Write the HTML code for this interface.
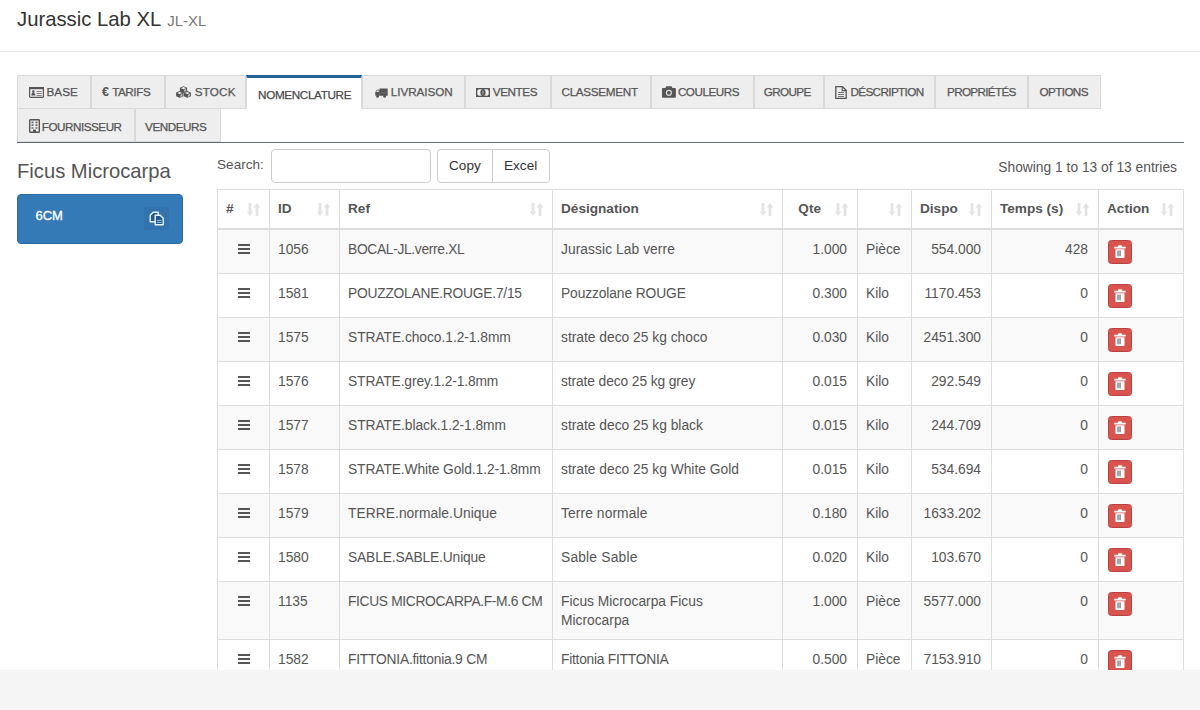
<!DOCTYPE html>
<html><head><meta charset="utf-8">
<style>
*{box-sizing:border-box;margin:0;padding:0}
html,body{width:1200px;height:710px;overflow:hidden;background:#fff;font-family:"Liberation Sans",sans-serif;color:#333;position:relative}
.abs{position:absolute;white-space:nowrap}
#title{left:17px;top:8.5px;font-size:20.3px;line-height:20.3px;color:#333}
#title small{font-size:15px;color:#777;margin-left:1px}
#hr{left:0;top:51px;width:1200px;height:1px;background:#e6e6e6}
.tab{position:absolute;height:34px;background:#eee;border:1px solid #d9d9d9;color:#555}
.tab.active{background:#fff;border-top:3px solid #22649a;border-bottom:none;color:#444}
.tab .tx{position:absolute;top:9px;font-size:11.7px;letter-spacing:-0.35px;line-height:14px;white-space:nowrap;-webkit-text-stroke:0.25px #555}
.tab svg{position:absolute}
#tabline{left:17px;top:142px;width:1167px;height:1px;background:#5e6b70}
#ficus{left:17px;top:160.5px;font-size:20.2px;line-height:20px;color:#555}
#btn6{left:17px;top:194px;width:166px;height:50px;background:#337ab7;border-radius:4px;border:1px solid #2e6da4}
#btn6 .t{position:absolute;left:17.5px;top:13px;color:#fff;font-size:13px;line-height:16px;-webkit-text-stroke:0.3px #fff}
#btn6 .ic{position:absolute;left:126px;top:12px;width:25px;height:23px;background:#3373ad;border-radius:2px}
#btn6 svg{position:absolute;left:131px;top:15.5px}
#search{left:217px;top:157px;font-size:13.6px;line-height:16px;color:#555}
#inp{left:271px;top:149px;width:160px;height:34px;border:1px solid #ccc;border-radius:4px;background:#fff}
#bgrp{left:437px;top:149px;width:113px;height:34px;border:1px solid #ccc;border-radius:4px;background:#fff}
#bgrp .d{position:absolute;left:54px;top:0;width:1px;height:32px;background:#ccc}
#bgrp span{position:absolute;top:8px;font-size:13.6px;line-height:16px;color:#333}
#showing{left:970px;top:160px;width:207px;text-align:right;font-size:13.8px;line-height:16px;color:#555}
#gray{left:0;top:670px;width:1200px;height:40px;background:#f5f5f5}
/* table */
#tbl{left:217px;top:189px;width:967px}
.row{position:absolute;left:0;width:967px;border-left:1px solid #ddd;border-right:1px solid #ddd;border-bottom:1px solid #ddd}
.row.head{top:0;height:41px;border-top:1px solid #ddd;border-bottom:2px solid #ddd;background:#fff}
.row.odd{background:#f9f9f9}
.c{position:absolute;top:0;height:100%;border-left:1px solid #ddd;font-size:13.8px;line-height:19px;color:#555;padding:10.25px 10px 0 8px;white-space:nowrap}
.c.first{border-left:none}
.c.r{text-align:right}
.c.nw{white-space:nowrap}
.head .c{font-weight:bold;color:#555;padding-top:9px;font-size:13.6px}
.sort{position:absolute;right:9px;top:12.5px;width:13px;height:13px}
.ham{position:absolute;left:20px;top:14px;width:12px;height:10px}
.ham i{display:block;height:2px;background:#555;margin-bottom:2px}
.trash{position:absolute;left:9px;top:10px;width:24px;height:24px;background:#d9534f;border:1px solid #b9403b;border-radius:3.5px}
</style></head><body>
<div id="title" class="abs">Jurassic Lab XL <small>JL-XL</small></div>
<div id="hr" class="abs"></div>
<div class="tab" style="left:17px;top:75px;width:74px"><svg style="left:10.9px;top:11.2px" width="15" height="11" viewBox="0 0 15 11"><rect x="0.6" y="0.6" width="13.8" height="9.8" rx="1" fill="none" stroke="#555" stroke-width="1.2"/><rect x="0" y="0" width="15" height="2.2" fill="#555"/><circle cx="4.3" cy="4.6" r="1.3" fill="#555"/><path d="M2.3 8.6c0-2 0.8-2.6 2-2.6s2 0.6 2 2.6z" fill="#555"/><path d="M7.5 4h5.3v1.1h-5.3zM7.5 6h5.3v1.1h-5.3zM7.5 8h5.3v0.9h-5.3z" fill="#555" opacity="0.7"/></svg><span class="tx" style="left:28.4px;top:9px;letter-spacing:0.1px">BASE</span></div>
<div class="tab" style="left:91px;top:75px;width:74px"><span class="tx" style="left:10.0px;top:9.3px;font-size:12.6px;font-weight:bold;letter-spacing:0;-webkit-text-stroke:0px">€</span><span class="tx" style="left:20.2px;top:9px;letter-spacing:-0.44px">TARIFS</span></div>
<div class="tab" style="left:165px;top:75px;width:81px"><svg style="left:9.9px;top:10.4px" width="15" height="12" viewBox="0 0 15 12"><path d="M7.5 0.2l3.6 1.5v3.7l-3.6 1.5-3.6-1.5v-3.7z" fill="#555"/><path d="M7.5 1.1l2.5 1.05-2.5 1.05-2.5-1.05z" fill="#f2f2f2"/><path d="M8.1 3.8000000000000003l2.1-0.9v2.3l-2.1 0.9z" fill="#bbb"/><path d="M3.7 5.1l3.6 1.5v3.7l-3.6 1.5-3.6-1.5v-3.7z" fill="#555"/><path d="M3.7 6.0l2.5 1.05-2.5 1.05-2.5-1.05z" fill="#f2f2f2"/><path d="M4.3 8.7l2.1-0.9v2.3l-2.1 0.9z" fill="#bbb"/><path d="M11.3 5.1l3.6 1.5v3.7l-3.6 1.5-3.6-1.5v-3.7z" fill="#555"/><path d="M11.3 6.0l2.5 1.05-2.5 1.05-2.5-1.05z" fill="#f2f2f2"/><path d="M11.9 8.7l2.1-0.9v2.3l-2.1 0.9z" fill="#bbb"/></svg><span class="tx" style="left:28.8px;top:9px;letter-spacing:0.15px">STOCK</span></div>
<div class="tab active" style="left:246px;top:75px;width:116px"><span class="tx" style="left:11.1px;top:9.5px;letter-spacing:-0.35px">NOMENCLATURE</span></div>
<div class="tab" style="left:362px;top:75px;width:103px"><svg style="left:12px;top:11.9px" width="13" height="10" viewBox="0 0 13 10"><path d="M4.5 0.5h8.2v7.3h-8.2z" fill="#555"/><path d="M0.3 4.2l1.6-2.4h2.8v6h-4.4z" fill="#555"/><path d="M1.2 4l1-1.5h1.5v1.5z" fill="#eee"/><circle cx="2.6" cy="8.4" r="1.4" fill="#555"/><circle cx="9.6" cy="8.4" r="1.4" fill="#555"/><path d="M6 4.5h5.5v0.8h-5.5z" fill="#777"/></svg><span class="tx" style="left:27.8px;top:9px;letter-spacing:-0.06px">LIVRAISON</span></div>
<div class="tab" style="left:465px;top:75px;width:86px"><svg style="left:9.8px;top:11.9px" width="14" height="9" viewBox="0 0 14 9"><rect x="0" y="0" width="14" height="9" fill="#555"/><rect x="1.3" y="1.3" width="11.4" height="6.4" fill="#f4f4f4"/><ellipse cx="7" cy="4.5" rx="2.6" ry="3.6" fill="#555"/><path d="M0 0h2.2v2.2h-2.2zM11.8 0h2.2v2.2h-2.2zM0 6.8h2.2v2.2h-2.2zM11.8 6.8h2.2v2.2h-2.2z" fill="#555"/><ellipse cx="7" cy="4.5" rx="1" ry="2.4" fill="#888"/></svg><span class="tx" style="left:26.8px;top:9px;letter-spacing:-0.42px">VENTES</span></div>
<div class="tab" style="left:551px;top:75px;width:100px"><span class="tx" style="left:9.5px;top:9px;letter-spacing:-0.3px">CLASSEMENT</span></div>
<div class="tab" style="left:651px;top:75px;width:103px"><svg style="left:10px;top:9.9px" width="14" height="12" viewBox="0 0 14 12"><path d="M4.3 0.2h5.2l1 1.8h2.3c0.7 0 1.1 0.4 1.1 1.1v7.6c0 0.7-0.4 1.1-1.1 1.1h-11.7c-0.7 0-1.1-0.4-1.1-1.1v-7.6c0-0.7 0.4-1.1 1.1-1.1h2.3z" fill="#555"/><circle cx="6.9" cy="6.8" r="3.1" fill="#ddd"/><circle cx="6.9" cy="6.8" r="1.9" fill="#555"/></svg><span class="tx" style="left:25.9px;top:9px;letter-spacing:-0.47px">COULEURS</span></div>
<div class="tab" style="left:754px;top:75px;width:70px"><span class="tx" style="left:8.7px;top:9px;letter-spacing:-0.6px">GROUPE</span></div>
<div class="tab" style="left:824px;top:75px;width:111px"><svg style="left:10px;top:9.7px" width="12" height="13" viewBox="0 0 12 13"><path d="M0.8 0.7h6.8l3.6 3.6v8h-10.4z" fill="none" stroke="#555" stroke-width="1.3"/><path d="M7.2 0.7v3.9h4" fill="none" stroke="#555" stroke-width="1.1"/><path d="M3 6h6v1h-6zM3 8h6v1h-6zM3 10h6v1h-6z" fill="#555" opacity="0.8"/></svg><span class="tx" style="left:25.4px;top:9px;letter-spacing:-0.61px">DÉSCRIPTION</span></div>
<div class="tab" style="left:935px;top:75px;width:93px"><span class="tx" style="left:11.0px;top:9px;letter-spacing:-0.66px">PROPRIÉTÉS</span></div>
<div class="tab" style="left:1028px;top:75px;width:73px"><span class="tx" style="left:10.6px;top:9px;letter-spacing:-0.62px">OPTIONS</span></div>
<div class="tab" style="left:17px;top:108px;width:118px"><svg style="left:10.5px;top:10.1px" width="11" height="14" viewBox="0 0 11 14"><rect x="0.7" y="0.7" width="9.6" height="12.6" rx="0.6" fill="none" stroke="#555" stroke-width="1.4"/><path d="M2.5 2.4h2v1.8h-2zM6.5 2.4h2v1.8h-2zM2.5 5.3h2v1.8h-2zM6.5 5.3h2v1.8h-2zM2.5 8.2h2v1.6h-2zM6.5 8.2h2v1.6h-2z" fill="#555" opacity="0.85"/><path d="M4 10.6h3v2.7h-3z" fill="#555"/></svg><span class="tx" style="left:23.8px;top:10.5px;letter-spacing:-0.48px">FOURNISSEUR</span></div>
<div class="tab" style="left:135px;top:108px;width:86px"><span class="tx" style="left:9.1px;top:10.5px;letter-spacing:-0.47px">VENDEURS</span></div>
<div id="tabline" class="abs"></div>

<div id="ficus" class="abs">Ficus Microcarpa</div>
<div id="btn6" class="abs"><span class="t">6CM</span><span class="ic"></span><svg width="16" height="15" viewBox="0 0 16 15"><path d="M1.2 4.2l3-3h5v9.6h-8z" fill="#25598a" stroke="#e8f4ff" stroke-width="1.4" stroke-linejoin="round"/><path d="M6.2 4.2h5l3 3v6.6h-8z" fill="#25598a" stroke="#e8f4ff" stroke-width="1.4" stroke-linejoin="round"/><path d="M8 9h4.5v1h-4.5zM8 11h4.5v1h-4.5z" fill="#8fc0ea"/></svg></div>

<div id="search" class="abs">Search:</div>
<div id="inp" class="abs"></div>
<div id="bgrp" class="abs"><span style="left:11px">Copy</span><div class="d"></div><span style="left:66px">Excel</span></div>
<div id="showing" class="abs">Showing 1 to 13 of 13 entries</div>

<div id="tbl" class="abs">
<div class="row head" style="height:41px"><div class="c first" style="left:0px;width:51px;">#<svg class="sort" viewBox="0 0 13 13"><path d="M1.6 0h2.8v8.4h2l-3.4 4.6-3.4-4.6h2z M8.6 13h2.8v-8.4h2l-3.4-4.6-3.4 4.6h2z" fill="#e3e3e3"/></svg></div><div class="c" style="left:51px;width:70px;">ID<svg class="sort" viewBox="0 0 13 13"><path d="M1.6 0h2.8v8.4h2l-3.4 4.6-3.4-4.6h2z M8.6 13h2.8v-8.4h2l-3.4-4.6-3.4 4.6h2z" fill="#e3e3e3"/></svg></div><div class="c" style="left:121px;width:213px;">Ref<svg class="sort" viewBox="0 0 13 13"><path d="M1.6 0h2.8v8.4h2l-3.4 4.6-3.4-4.6h2z M8.6 13h2.8v-8.4h2l-3.4-4.6-3.4 4.6h2z" fill="#e3e3e3"/></svg></div><div class="c" style="left:334px;width:230px;">Désignation<svg class="sort" viewBox="0 0 13 13"><path d="M1.6 0h2.8v8.4h2l-3.4 4.6-3.4-4.6h2z M8.6 13h2.8v-8.4h2l-3.4-4.6-3.4 4.6h2z" fill="#e3e3e3"/></svg></div><div class="c r" style="left:564px;width:75px;padding-right:36px;">Qte<svg class="sort" viewBox="0 0 13 13"><path d="M1.6 0h2.8v8.4h2l-3.4 4.6-3.4-4.6h2z M8.6 13h2.8v-8.4h2l-3.4-4.6-3.4 4.6h2z" fill="#e3e3e3"/></svg></div><div class="c" style="left:639px;width:54px;"><svg class="sort" viewBox="0 0 13 13"><path d="M1.6 0h2.8v8.4h2l-3.4 4.6-3.4-4.6h2z M8.6 13h2.8v-8.4h2l-3.4-4.6-3.4 4.6h2z" fill="#e3e3e3"/></svg></div><div class="c" style="left:693px;width:80px;">Dispo<svg class="sort" viewBox="0 0 13 13"><path d="M1.6 0h2.8v8.4h2l-3.4 4.6-3.4-4.6h2z M8.6 13h2.8v-8.4h2l-3.4-4.6-3.4 4.6h2z" fill="#e3e3e3"/></svg></div><div class="c" style="left:773px;width:107px;">Temps (s)<svg class="sort" viewBox="0 0 13 13"><path d="M1.6 0h2.8v8.4h2l-3.4 4.6-3.4-4.6h2z M8.6 13h2.8v-8.4h2l-3.4-4.6-3.4 4.6h2z" fill="#e3e3e3"/></svg></div><div class="c" style="left:880px;width:85px;">Action<svg class="sort" viewBox="0 0 13 13"><path d="M1.6 0h2.8v8.4h2l-3.4 4.6-3.4-4.6h2z M8.6 13h2.8v-8.4h2l-3.4-4.6-3.4 4.6h2z" fill="#e3e3e3"/></svg></div></div>
<div class="row odd" style="top:41px;height:44px"><div class="c first" style="left:0px;width:51px"><span class="ham"><i></i><i></i><i></i></span></div><div class="c" style="left:51px;width:70px">1056</div><div class="c nw" style="left:121px;width:213px"><span style="letter-spacing:-0.325px">BOCAL-JL.verre.XL</span></div><div class="c" style="left:334px;width:230px"><span style="letter-spacing:0.065px">Jurassic Lab verre</span></div><div class="c r" style="left:564px;width:75px">1.000</div><div class="c" style="left:639px;width:54px">Pièce</div><div class="c r" style="left:693px;width:80px">554.000</div><div class="c r" style="left:773px;width:107px">428</div><div class="c" style="left:880px;width:85px"><span class="trash"><svg width="12" height="13" viewBox="0 0 12 13" style="position:absolute;left:5.2px;top:4px"><path d="M4.2 0.3h3.6v1.4h3.9v1.9h-11.4v-1.9h3.9z" fill="#fff"/><path d="M1.5 4.2h9v8.1c0 0.4-0.3 0.7-0.7 0.7h-7.6c-0.4 0-0.7-0.3-0.7-0.7z" fill="#fff"/><path d="M3.5 5.6h1.1v5.6h-1.1zM5.5 5.6h1.1v5.6h-1.1z" fill="#6a5a66"/></svg></span></div></div>
<div class="row" style="top:85px;height:44px"><div class="c first" style="left:0px;width:51px"><span class="ham"><i></i><i></i><i></i></span></div><div class="c" style="left:51px;width:70px">1581</div><div class="c nw" style="left:121px;width:213px"><span style="letter-spacing:-0.23px">POUZZOLANE.ROUGE.7/15</span></div><div class="c" style="left:334px;width:230px"><span style="letter-spacing:-0.113px">Pouzzolane ROUGE</span></div><div class="c r" style="left:564px;width:75px">0.300</div><div class="c" style="left:639px;width:54px">Kilo</div><div class="c r" style="left:693px;width:80px">1170.453</div><div class="c r" style="left:773px;width:107px">0</div><div class="c" style="left:880px;width:85px"><span class="trash"><svg width="12" height="13" viewBox="0 0 12 13" style="position:absolute;left:5.2px;top:4px"><path d="M4.2 0.3h3.6v1.4h3.9v1.9h-11.4v-1.9h3.9z" fill="#fff"/><path d="M1.5 4.2h9v8.1c0 0.4-0.3 0.7-0.7 0.7h-7.6c-0.4 0-0.7-0.3-0.7-0.7z" fill="#fff"/><path d="M3.5 5.6h1.1v5.6h-1.1zM5.5 5.6h1.1v5.6h-1.1z" fill="#6a5a66"/></svg></span></div></div>
<div class="row odd" style="top:129px;height:44px"><div class="c first" style="left:0px;width:51px"><span class="ham"><i></i><i></i><i></i></span></div><div class="c" style="left:51px;width:70px">1575</div><div class="c nw" style="left:121px;width:213px"><span style="letter-spacing:-0.048px">STRATE.choco.1.2-1.8mm</span></div><div class="c" style="left:334px;width:230px">strate deco 25 kg choco</div><div class="c r" style="left:564px;width:75px">0.030</div><div class="c" style="left:639px;width:54px">Kilo</div><div class="c r" style="left:693px;width:80px">2451.300</div><div class="c r" style="left:773px;width:107px">0</div><div class="c" style="left:880px;width:85px"><span class="trash"><svg width="12" height="13" viewBox="0 0 12 13" style="position:absolute;left:5.2px;top:4px"><path d="M4.2 0.3h3.6v1.4h3.9v1.9h-11.4v-1.9h3.9z" fill="#fff"/><path d="M1.5 4.2h9v8.1c0 0.4-0.3 0.7-0.7 0.7h-7.6c-0.4 0-0.7-0.3-0.7-0.7z" fill="#fff"/><path d="M3.5 5.6h1.1v5.6h-1.1zM5.5 5.6h1.1v5.6h-1.1z" fill="#6a5a66"/></svg></span></div></div>
<div class="row" style="top:173px;height:44px"><div class="c first" style="left:0px;width:51px"><span class="ham"><i></i><i></i><i></i></span></div><div class="c" style="left:51px;width:70px">1576</div><div class="c nw" style="left:121px;width:213px"><span style="letter-spacing:-0.125px">STRATE.grey.1.2-1.8mm</span></div><div class="c" style="left:334px;width:230px"><span style="letter-spacing:-0.105px">strate deco 25 kg grey</span></div><div class="c r" style="left:564px;width:75px">0.015</div><div class="c" style="left:639px;width:54px">Kilo</div><div class="c r" style="left:693px;width:80px">292.549</div><div class="c r" style="left:773px;width:107px">0</div><div class="c" style="left:880px;width:85px"><span class="trash"><svg width="12" height="13" viewBox="0 0 12 13" style="position:absolute;left:5.2px;top:4px"><path d="M4.2 0.3h3.6v1.4h3.9v1.9h-11.4v-1.9h3.9z" fill="#fff"/><path d="M1.5 4.2h9v8.1c0 0.4-0.3 0.7-0.7 0.7h-7.6c-0.4 0-0.7-0.3-0.7-0.7z" fill="#fff"/><path d="M3.5 5.6h1.1v5.6h-1.1zM5.5 5.6h1.1v5.6h-1.1z" fill="#6a5a66"/></svg></span></div></div>
<div class="row odd" style="top:217px;height:44px"><div class="c first" style="left:0px;width:51px"><span class="ham"><i></i><i></i><i></i></span></div><div class="c" style="left:51px;width:70px">1577</div><div class="c nw" style="left:121px;width:213px"><span style="letter-spacing:-0.057px">STRATE.black.1.2-1.8mm</span></div><div class="c" style="left:334px;width:230px">strate deco 25 kg black</div><div class="c r" style="left:564px;width:75px">0.015</div><div class="c" style="left:639px;width:54px">Kilo</div><div class="c r" style="left:693px;width:80px">244.709</div><div class="c r" style="left:773px;width:107px">0</div><div class="c" style="left:880px;width:85px"><span class="trash"><svg width="12" height="13" viewBox="0 0 12 13" style="position:absolute;left:5.2px;top:4px"><path d="M4.2 0.3h3.6v1.4h3.9v1.9h-11.4v-1.9h3.9z" fill="#fff"/><path d="M1.5 4.2h9v8.1c0 0.4-0.3 0.7-0.7 0.7h-7.6c-0.4 0-0.7-0.3-0.7-0.7z" fill="#fff"/><path d="M3.5 5.6h1.1v5.6h-1.1zM5.5 5.6h1.1v5.6h-1.1z" fill="#6a5a66"/></svg></span></div></div>
<div class="row" style="top:261px;height:44px"><div class="c first" style="left:0px;width:51px"><span class="ham"><i></i><i></i><i></i></span></div><div class="c" style="left:51px;width:70px">1578</div><div class="c nw" style="left:121px;width:213px"><span style="letter-spacing:-0.096px">STRATE.White Gold.1.2-1.8mm</span></div><div class="c" style="left:334px;width:230px">strate deco 25 kg White Gold</div><div class="c r" style="left:564px;width:75px">0.015</div><div class="c" style="left:639px;width:54px">Kilo</div><div class="c r" style="left:693px;width:80px">534.694</div><div class="c r" style="left:773px;width:107px">0</div><div class="c" style="left:880px;width:85px"><span class="trash"><svg width="12" height="13" viewBox="0 0 12 13" style="position:absolute;left:5.2px;top:4px"><path d="M4.2 0.3h3.6v1.4h3.9v1.9h-11.4v-1.9h3.9z" fill="#fff"/><path d="M1.5 4.2h9v8.1c0 0.4-0.3 0.7-0.7 0.7h-7.6c-0.4 0-0.7-0.3-0.7-0.7z" fill="#fff"/><path d="M3.5 5.6h1.1v5.6h-1.1zM5.5 5.6h1.1v5.6h-1.1z" fill="#6a5a66"/></svg></span></div></div>
<div class="row odd" style="top:305px;height:44px"><div class="c first" style="left:0px;width:51px"><span class="ham"><i></i><i></i><i></i></span></div><div class="c" style="left:51px;width:70px">1579</div><div class="c nw" style="left:121px;width:213px"><span style="letter-spacing:0.047px">TERRE.normale.Unique</span></div><div class="c" style="left:334px;width:230px"><span style="letter-spacing:0.1px">Terre normale</span></div><div class="c r" style="left:564px;width:75px">0.180</div><div class="c" style="left:639px;width:54px">Kilo</div><div class="c r" style="left:693px;width:80px">1633.202</div><div class="c r" style="left:773px;width:107px">0</div><div class="c" style="left:880px;width:85px"><span class="trash"><svg width="12" height="13" viewBox="0 0 12 13" style="position:absolute;left:5.2px;top:4px"><path d="M4.2 0.3h3.6v1.4h3.9v1.9h-11.4v-1.9h3.9z" fill="#fff"/><path d="M1.5 4.2h9v8.1c0 0.4-0.3 0.7-0.7 0.7h-7.6c-0.4 0-0.7-0.3-0.7-0.7z" fill="#fff"/><path d="M3.5 5.6h1.1v5.6h-1.1zM5.5 5.6h1.1v5.6h-1.1z" fill="#6a5a66"/></svg></span></div></div>
<div class="row" style="top:349px;height:44px"><div class="c first" style="left:0px;width:51px"><span class="ham"><i></i><i></i><i></i></span></div><div class="c" style="left:51px;width:70px">1580</div><div class="c nw" style="left:121px;width:213px"><span style="letter-spacing:-0.153px">SABLE.SABLE.Unique</span></div><div class="c" style="left:334px;width:230px"><span style="letter-spacing:0.19px">Sable Sable</span></div><div class="c r" style="left:564px;width:75px">0.020</div><div class="c" style="left:639px;width:54px">Kilo</div><div class="c r" style="left:693px;width:80px">103.670</div><div class="c r" style="left:773px;width:107px">0</div><div class="c" style="left:880px;width:85px"><span class="trash"><svg width="12" height="13" viewBox="0 0 12 13" style="position:absolute;left:5.2px;top:4px"><path d="M4.2 0.3h3.6v1.4h3.9v1.9h-11.4v-1.9h3.9z" fill="#fff"/><path d="M1.5 4.2h9v8.1c0 0.4-0.3 0.7-0.7 0.7h-7.6c-0.4 0-0.7-0.3-0.7-0.7z" fill="#fff"/><path d="M3.5 5.6h1.1v5.6h-1.1zM5.5 5.6h1.1v5.6h-1.1z" fill="#6a5a66"/></svg></span></div></div>
<div class="row odd" style="top:393px;height:58px"><div class="c first" style="left:0px;width:51px"><span class="ham"><i></i><i></i><i></i></span></div><div class="c" style="left:51px;width:70px">1135</div><div class="c nw" style="left:121px;width:213px"><span style="letter-spacing:-0.342px">FICUS MICROCARPA.F-M.6 CM</span></div><div class="c" style="left:334px;width:230px">Ficus Microcarpa Ficus<br>Microcarpa</div><div class="c r" style="left:564px;width:75px">1.000</div><div class="c" style="left:639px;width:54px">Pièce</div><div class="c r" style="left:693px;width:80px">5577.000</div><div class="c r" style="left:773px;width:107px">0</div><div class="c" style="left:880px;width:85px"><span class="trash"><svg width="12" height="13" viewBox="0 0 12 13" style="position:absolute;left:5.2px;top:4px"><path d="M4.2 0.3h3.6v1.4h3.9v1.9h-11.4v-1.9h3.9z" fill="#fff"/><path d="M1.5 4.2h9v8.1c0 0.4-0.3 0.7-0.7 0.7h-7.6c-0.4 0-0.7-0.3-0.7-0.7z" fill="#fff"/><path d="M3.5 5.6h1.1v5.6h-1.1zM5.5 5.6h1.1v5.6h-1.1z" fill="#6a5a66"/></svg></span></div></div>
<div class="row" style="top:451px;height:44px"><div class="c first" style="left:0px;width:51px"><span class="ham"><i></i><i></i><i></i></span></div><div class="c" style="left:51px;width:70px">1582</div><div class="c nw" style="left:121px;width:213px"><span style="letter-spacing:-0.214px">FITTONIA.fittonia.9 CM</span></div><div class="c" style="left:334px;width:230px"><span style="letter-spacing:-0.25px">Fittonia FITTONIA</span></div><div class="c r" style="left:564px;width:75px">0.500</div><div class="c" style="left:639px;width:54px">Pièce</div><div class="c r" style="left:693px;width:80px">7153.910</div><div class="c r" style="left:773px;width:107px">0</div><div class="c" style="left:880px;width:85px"><span class="trash"><svg width="12" height="13" viewBox="0 0 12 13" style="position:absolute;left:5.2px;top:4px"><path d="M4.2 0.3h3.6v1.4h3.9v1.9h-11.4v-1.9h3.9z" fill="#fff"/><path d="M1.5 4.2h9v8.1c0 0.4-0.3 0.7-0.7 0.7h-7.6c-0.4 0-0.7-0.3-0.7-0.7z" fill="#fff"/><path d="M3.5 5.6h1.1v5.6h-1.1zM5.5 5.6h1.1v5.6h-1.1z" fill="#6a5a66"/></svg></span></div></div>
</div>

<div id="gray" class="abs"></div>
</body></html>
